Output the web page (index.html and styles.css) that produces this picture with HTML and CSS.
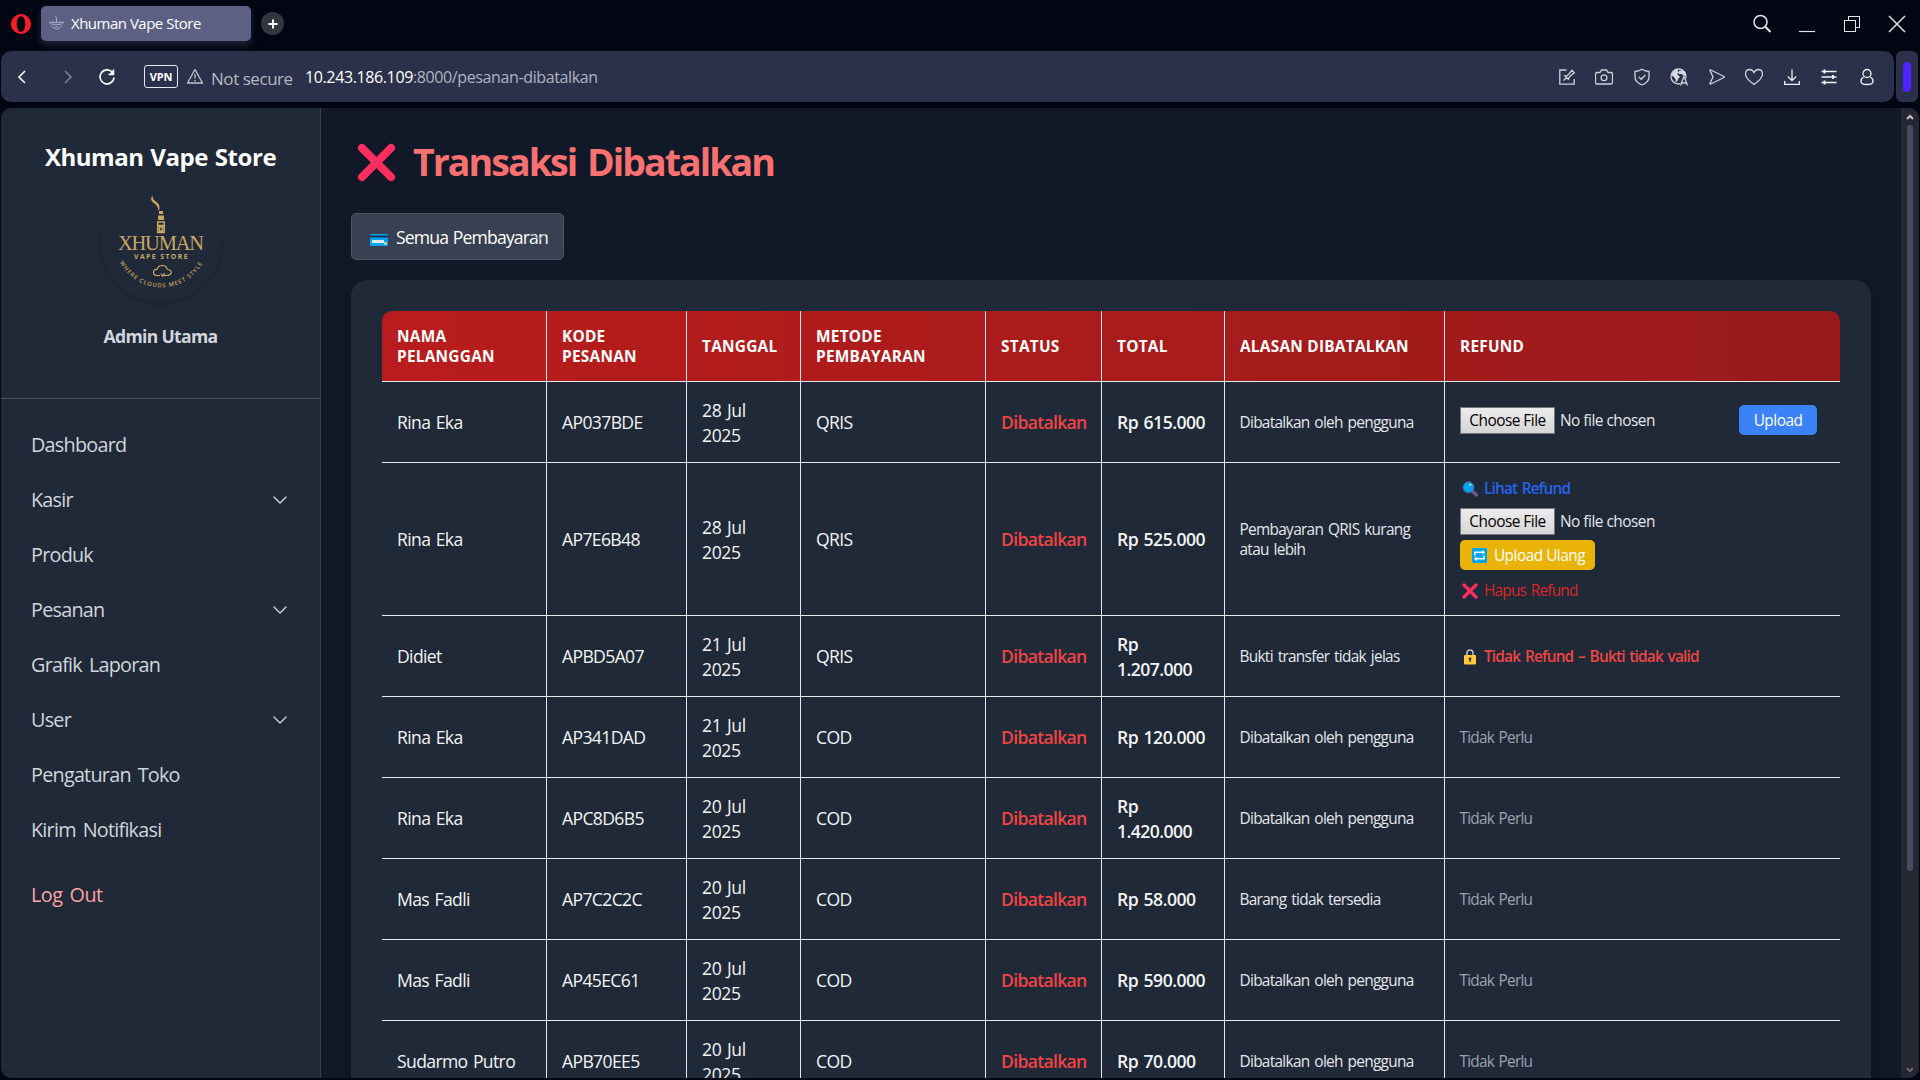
FILE: index.html
```html
<!DOCTYPE html>
<html lang="id">
<head>
<meta charset="utf-8">
<title>Xhuman Vape Store</title>
<link rel="stylesheet" href="styles.css">
</head>
<body>
<svg class="defs" width="0" height="0" aria-hidden="true">
  <symbol id="cross" viewBox="0 0 16 16"><path d="M2 2l12 12M14 2L2 14" stroke="#ff2e5f" stroke-width="3.2" stroke-linecap="round"/></symbol>
  <symbol id="chevron" viewBox="0 0 16 16"><path d="M2 5l6 6 6-6" fill="none" stroke="currentColor" stroke-width="1.4" stroke-linecap="round" stroke-linejoin="round"/></symbol>
</svg>

<header class="tabbar">
  <svg class="opera" viewBox="0 0 20 20"><path fill="#ff1b2d" fill-rule="evenodd" d="M10 0a10 10 0 1 0 0 20a10 10 0 1 0 0-20zM10 2.2c2.6 0 4.300 3.300 4.300 7.800s-1.700 7.800-4.300 7.800S5.700 14.500 5.700 10S7.400 2.200 10 2.200z"/></svg>
  <div class="tab">
    <svg class="favicon" viewBox="0 0 16 16" fill="none" stroke="#a9adc4"><path d="M7 0l1 2v4M8 3v4M1 7h14M3 9h10M2 10q6 8 12 0M6 11.500h4"/><path d="M1 5.500v3M4 5.500v3M12 5.500v3M15 5.500v3" stroke-width=".8"/></svg>
    <span class="tab-title">Xhuman Vape Store</span>
  </div>
  <div class="newtab"><svg viewBox="0 0 10 10" width="10" height="10"><path d="M5 .5v9M.5 5h9" stroke="#fff" stroke-width="2"/></svg></div>
  <div class="window-buttons">
    <svg viewBox="0 0 20 20" width="20" height="20"><circle cx="8.500" cy="8" r="6.500"/><path d="M13.300 12.800l5.200 5.200" stroke-width="2"/></svg>
    <svg viewBox="0 0 20 20" width="20" height="20"><path d="M2 17.500h16" stroke-width="1.200"/></svg>
    <svg viewBox="0 0 20 20" width="20" height="20" shape-rendering="crispEdges"><path d="M2.500 6.500h11v11h-11zM6.500 6v-3.500h11v11H14" stroke-width="1"/></svg>
    <svg viewBox="0 0 20 20" width="20" height="20"><path d="M2 2l16 16M18 2L2 18"/></svg>
  </div>
</header>

<div class="addressrow">
  <nav class="toolbar">
    <svg class="back" viewBox="0 0 10 14"><path d="M8 1L2 7l6 6"/></svg>
    <svg class="forward" viewBox="0 0 10 14"><path d="M2 1l6 6-6 6"/></svg>
    <svg class="reload" viewBox="0 0 18 18"><path d="M14.500 4.500A7 7 0 1 0 16 9.500M15.500 1.500v5h-5"/><path d="M11.500 6l4-4v4z" fill="#fff" stroke="none"/></svg>
    <span class="vpn">VPN</span>
    <svg class="warn" viewBox="0 0 18 17"><path d="M9 1.500L16.500 15h-15zM9 6v4.500M9 12v1.500" stroke-linejoin="round"/></svg>
    <span class="insecure">Not secure</span>
    <span class="url"><b>10.243.186.109</b>:8000/pesanan-dibatalkan</span>
    <div class="tools">
      <svg viewBox="0 0 18 18"><path d="M8.500 2H1.800v14.200h14.400V11M5.500 12.500l3.300-3.300M6.300 7.200l4.500 4.500M7.300 8q1.700.3 3-1.300L14 2.300 16.300 4.600 12 8.300q-1.600 1.300-1.300 3"/></svg>
      <svg viewBox="0 0 18 18"><path d="M2 4.500h3L6.500 2h5L13 4.500h3q1.500 0 1.500 1.500v8.500q0 1.500-1.500 1.500H2q-1.500 0-1.500-1.500V6q0-1.500 1.500-1.500z"/><circle cx="9" cy="9.800" r="2.900"/></svg>
      <svg viewBox="0 0 18 18"><path d="M9 1.300q3.500 2.200 7 2.200v5.500q0 5-7 8q-7-3-7-8V3.500q3.500 0 7-2.200zM5.800 8.800l2.500 2.500 4-4.300"/></svg>
      <svg viewBox="0 0 18 18"><circle cx="8.500" cy="8.500" r="7.500"/><path d="M7 1q-4 1-6 6l3 2 2 3-1 2q3 0 3-3l2-2-3-3 2-1zM9 3l4-1q4 3 3 6H13l-1-2-3 0z" fill="#d5d8e0" stroke="none"/><path d="M9 18.500l4.500-11h1L19 18.500z" fill="#2a3049" stroke="none"/><path d="M10.500 17.500l3.200-8.500h.6l3.200 8.500M11.500 15h5"/></svg>
      <svg viewBox="0 0 18 18"><path d="M2 2.500q0-.8.800-.5L16 8.500q.8.500 0 1L2.800 16q-.8.300-.8-.5L5 9z"/></svg>
      <svg viewBox="0 0 18 18"><path d="M9 16.500Q.5 10.500.5 6Q.5 1.800 4.500 1.500Q7.500 1.500 9 4.500Q10.500 1.500 13.500 1.500Q17.500 1.800 17.500 6Q17.500 10.500 9 16.500z"/></svg>
      <svg class="bright" viewBox="0 0 18 18"><path d="M9 1.500v11M4.800 8.500L9 12.700l4.200-4.200M1.700 13v3.300h14.600V13"/></svg>
      <svg class="bright" viewBox="0 0 18 18"><path d="M1.500 3.500h15M1.500 9h15M1.500 14.500h15"/><path d="M4.500 1.500v4M13 7v4M4.500 12.500v4" stroke-width="2"/></svg>
      <svg class="bright" viewBox="0 0 18 18"><circle cx="9" cy="5.500" r="4"/><path d="M5.500 9Q3 10.500 3 13.500Q3 16.500 9 16.500T15 13.500Q15 10.500 12.500 9"/></svg>
    </div>
  </nav>
  <div class="sidepanel"><i></i></div>
</div>

<div class="page">
  <aside class="sidebar">
    <div class="brand">
      <h2>Xhuman Vape Store</h2>
      <svg class="logo" viewBox="0 0 120 120">
        <defs><path id="ring" d="M18.500 79.500A47 47 0 0 0 102.500 79.500"/></defs>
        <path d="M51.500 13.500Q48.500 17 52 20.500Q57.500 23.500 57.500 29Q60.500 24 55.500 20Q51.500 17.500 51.500 13.500z" fill="#c9a765"/>
        <path d="M58 29h4v3h-4zM57 33.500h6v4.500h-6z" fill="#c9a765"/>
        <path d="M56.700 40h6.600v10.500h-6.600zM56 43.500h8M58.500 45h3v4h-3z" fill="none" stroke="#c9a765" stroke-width="1.500"/>
        <text class="logo-name" x="17" y="67.500" textLength="86">XHUMAN</text>
        <text class="logo-sub" x="33" y="77" textLength="53.500">VAPE STORE</text>
        <path transform="translate(2 .5)" d="M57 93h-4q-3-1-2.500-4q1-2.500 3.500-2Q55 83 59.300 83t5 4q4 0 4 3.200q-1 2.800-4.500 2.800H61q-3 0-3-2M61 90.500q1 2-2 3.500" fill="none" stroke="#c9a765" stroke-width="1.100"/>
        <text class="logo-motto"><textPath href="#ring" textLength="100" startOffset="1">WHERE CLOUDS  MEET STYLE</textPath></text>
      </svg>
      <p>Admin Utama</p>
    </div>
    <ul class="menu">
      <li>Dashboard</li>
      <li>Kasir<svg><use href="#chevron"/></svg></li>
      <li>Produk</li>
      <li>Pesanan<svg><use href="#chevron"/></svg></li>
      <li>Grafik Laporan</li>
      <li>User<svg><use href="#chevron"/></svg></li>
      <li>Pengaturan Toko</li>
      <li>Kirim Notifikasi</li>
      <li class="logout">Log Out</li>
    </ul>
  </aside>

  <main class="content">
    <h1><svg viewBox="0 0 16 16"><use href="#cross"/></svg><span>Transaksi Dibatalkan</span></h1>
    <div class="filter">
      <svg viewBox="0 0 18 12"><rect width="18" height="12" rx="1" fill="#00a4ef"/><path d="M0 1.500h18v2H0z" fill="#17305c"/><path d="M2 6h12v3H2z" fill="#d9ecf7"/><path d="M14 8.500h3v2h-3z" fill="#ffe066"/></svg>
      <span>Semua Pembayaran</span>
      <svg class="filter-arrow"><use href="#chevron"/></svg>
    </div>
    <section class="card">
      <table>
        <colgroup><col class="c1"><col class="c2"><col class="c3"><col class="c4"><col class="c5"><col class="c6"><col class="c7"><col class="c8"></colgroup>
        <thead>
          <tr><th>NAMA<br>PELANGGAN</th><th>KODE<br>PESANAN</th><th>TANGGAL</th><th>METODE<br>PEMBAYARAN</th><th>STATUS</th><th>TOTAL</th><th>ALASAN DIBATALKAN</th><th>REFUND</th></tr>
        </thead>
        <tbody>
          <tr><td>Rina Eka</td><td>AP037BDE</td><td class="date">28 Jul<br>2025</td><td>QRIS</td><td class="status">Dibatalkan</td><td class="total">Rp 615.000</td><td class="reason">Dibatalkan oleh pengguna</td>
            <td class="refund"><div class="upload-row"><div class="file"><span class="choose">Choose File</span><span>No file chosen</span></div><span class="btn blue">Upload</span></div></td></tr>
          <tr class="tall"><td>Rina Eka</td><td>AP7E6B48</td><td class="date">28 Jul<br>2025</td><td>QRIS</td><td class="status">Dibatalkan</td><td class="total">Rp 525.000</td><td class="reason">Pembayaran QRIS kurang<br>atau lebih</td>
            <td class="refund"><div class="stack">
              <div class="link see"><svg viewBox="0 0 16 16"><path d="M10 10l4.500 4" stroke="#6b5b95" stroke-width="3.200" stroke-linecap="round"/><circle cx="6.500" cy="6.300" r="5.500" fill="#00a4ef" stroke="#51618f"/><circle cx="8.300" cy="3.800" r="1" fill="#fff"/></svg>Lihat Refund</div>
              <div class="file"><span class="choose">Choose File</span><span>No file chosen</span></div>
              <div class="btn amber"><svg viewBox="0 0 16 16"><rect width="16" height="16" rx="1.500" fill="#00a4ef"/><path d="M3 8V4.500h9M13 8v3.500H4" fill="none" stroke="#fff" stroke-width="1.600"/><path d="M11 2l3 2.500L11 7zM5 9l-3 2.500L5 14z" fill="#fff"/></svg><span>Upload Ulang</span></div>
              <div class="link remove"><svg viewBox="0 0 16 16"><use href="#cross"/></svg>Hapus Refund</div>
            </div></td></tr>
          <tr><td>Didiet</td><td>APBD5A07</td><td class="date">21 Jul<br>2025</td><td>QRIS</td><td class="status">Dibatalkan</td><td class="total">Rp<br>1.207.000</td><td class="reason">Bukti transfer tidak jelas</td>
            <td class="refund"><div class="link denied"><svg viewBox="0 0 16 16"><path d="M5 7V4q0-3 3-3t3 3v3" fill="none" stroke="#b9bcc6" stroke-width="1.600"/><rect x="2" y="6" width="12" height="9.500" rx="1" fill="#ffc83d"/><circle cx="8" cy="9.800" r="1.500" fill="#4b3a35"/><path d="M8 10v3" stroke="#4b3a35" stroke-width="1.400"/></svg>Tidak Refund – Bukti tidak valid</div></td></tr>
          <tr><td>Rina Eka</td><td>AP341DAD</td><td class="date">21 Jul<br>2025</td><td>COD</td><td class="status">Dibatalkan</td><td class="total">Rp 120.000</td><td class="reason">Dibatalkan oleh pengguna</td><td class="none">Tidak Perlu</td></tr>
          <tr><td>Rina Eka</td><td>APC8D6B5</td><td class="date">20 Jul<br>2025</td><td>COD</td><td class="status">Dibatalkan</td><td class="total">Rp<br>1.420.000</td><td class="reason">Dibatalkan oleh pengguna</td><td class="none">Tidak Perlu</td></tr>
          <tr><td>Mas Fadli</td><td>AP7C2C2C</td><td class="date">20 Jul<br>2025</td><td>COD</td><td class="status">Dibatalkan</td><td class="total">Rp 58.000</td><td class="reason">Barang tidak tersedia</td><td class="none">Tidak Perlu</td></tr>
          <tr><td>Mas Fadli</td><td>AP45EC61</td><td class="date">20 Jul<br>2025</td><td>COD</td><td class="status">Dibatalkan</td><td class="total">Rp 590.000</td><td class="reason">Dibatalkan oleh pengguna</td><td class="none">Tidak Perlu</td></tr>
          <tr><td>Sudarmo Putro</td><td>APB70EE5</td><td class="date">20 Jul<br>2025</td><td>COD</td><td class="status">Dibatalkan</td><td class="total">Rp 70.000</td><td class="reason">Dibatalkan oleh pengguna</td><td class="none">Tidak Perlu</td></tr>
        </tbody>
      </table>
    </section>
  </main>

  <div class="scrollbar">
    <svg viewBox="0 0 8 6"><path d="M1 5l3-3 3 3" fill="none" stroke="#c4c4c8" stroke-width="2"/></svg>
    <i></i>
    <svg class="down" viewBox="0 0 8 6"><path d="M1 1l3 3 3-3" fill="none" stroke="#6a6a70" stroke-width="2"/></svg>
  </div>
</div>
</body>
</html>
```
FILE: styles.css
```css
* { box-sizing: border-box; }
body {
  margin: 0;
  width: 1920px;
  height: 1080px;
  overflow: hidden;
  background: #020512;
  color: #f3f4f6;
  font-family: "Open Sans", "Noto Sans", sans-serif;
  font-size: 17px;
  letter-spacing: -0.5px;
  display: flex;
  flex-direction: column;
  white-space: nowrap;
}
svg { flex: none; display: block; }
.defs { position: absolute; }
h1, h2, p, ul { margin: 0; padding: 0; }

/* Tab strip */
.tabbar { height: 51px; flex: none; display: flex; align-items: flex-start; padding: 6px 13px 0 11px; }
.opera { width: 20px; height: 20px; margin: 8px 10px 0 0; }
.tab {
  width: 210px; height: 35px; border-radius: 5px; background: #5c6183;
  display: flex; align-items: center; padding-left: 8px; gap: 7px;
  box-shadow: 0 4px 7px rgba(92, 97, 131, .35);
}
.favicon { width: 15px; height: 15px; }
.tab-title { font-size: 15px; color: #fff; letter-spacing: -0.5px; padding-bottom: 2px; }
.newtab {
  width: 23px; height: 23px; border-radius: 50%; background: #33353f; margin: 6px 0 0 10px;
  display: flex; align-items: center; justify-content: center;
}
.window-buttons { margin-left: auto; margin-top: 8px; display: flex; gap: 25px; fill: none; stroke: #e3e4ea; stroke-width: 1.5; }

/* Address row */
.addressrow { height: 51px; flex: none; display: flex; gap: 2px; padding: 0 2px 0 1px; }
.toolbar {
  width: 1893px; border-radius: 10px; background: #2b314a; display: flex; align-items: center;
  padding: 0 18.5px 0 16px; fill: none; stroke: #fff; stroke-width: 1.6;
}
.back { width: 10px; height: 14px; margin-right: 36px; }
.forward { width: 10px; height: 14px; margin-right: 25px; stroke: #7b8096; }
.reload { width: 18px; height: 18px; margin-right: 28px; }
.vpn {
  width: 34px; height: 23px; border: 1.5px solid #e8e9ee; border-radius: 3px; margin-right: 8px;
  font-size: 11px; font-weight: 700; line-height: 22px; text-align: center; color: #fff; letter-spacing: -0.2px;
}
.warn { width: 18px; height: 17px; stroke: #c1c4cc; stroke-width: 1.3; margin-right: 7px; }
.insecure { width: 94px; font-size: 17px; color: #b5b8c0; padding-top: 3px; letter-spacing: -0.45px; }
.url { font-size: 16px; color: #aeb3c2; letter-spacing: -0.38px; }
.url b { font-weight: 400; color: #fff; }
.tools { margin-left: auto; display: flex; gap: 19.5px; stroke: #cfd1d7; stroke-width: 1.3; }
.tools svg { width: 18px; height: 18px; }
.tools .bright { stroke: #f1f2f5; }
.sidepanel { width: 22px; border-radius: 6px; background: #2b314a; display: flex; align-items: center; justify-content: center; }
.sidepanel i { width: 8px; height: 30px; border-radius: 4px; background: #4f22ff; }

/* Page frame */
.page {
  margin: 6px 1px 2px; width: 1918px; height: 970px; background: #111827;
  border-radius: 10px; overflow: hidden; display: flex;
}
.sidebar { width: 320px; flex: none; background: #1f2937; border-right: 1px solid #374151; }
.brand { height: 291px; border-bottom: 1px solid #4b5563; display: flex; flex-direction: column; align-items: center; padding-top: 32px; }
.brand h2 { font-size: 24px; line-height: 34px; font-weight: 700; color: #fff; letter-spacing: -0.45px; word-spacing: 1px; }
.logo { width: 120px; height: 120px; margin-top: 8px; border-radius: 50%; box-shadow: 0 2px 4px rgba(0, 0, 0, .12); }
.logo text { fill: #c9a765; letter-spacing: 0; }
.logo-name { font: 20.500px "Liberation Serif", serif; }
.logo-sub { font: 700 6.8px "Open Sans", sans-serif; }
.logo-motto { font: 600 5.800px "Open Sans", sans-serif; }
.brand p { margin-top: 21px; font-size: 17.6px; line-height: 26px; font-weight: 700; color: #d1d5db; letter-spacing: -0.68px; }
.menu { list-style: none; padding: 18px 32px 0 30px; font-size: 19.8px; color: #d1d5db; letter-spacing: -0.75px; word-spacing: 2.5px; }
.menu li { height: 55px; display: flex; align-items: center; justify-content: space-between; }
.menu svg { width: 16px; height: 16px; }
.menu .logout { margin-top: 10px; color: #fca5a5; letter-spacing: -0.5px; }

.content { width: 1580px; flex: none; padding: 26px 30px 0; }
h1 { height: 56px; display: flex; align-items: center; padding-left: 6px; gap: 17px; color: #f87171; font-size: 37.500px; line-height: 56px; font-weight: 700; letter-spacing: -1.95px; word-spacing: 3px; }
h1 svg { width: 39px; height: 39px; }
.filter {
  position: relative; width: 213px; height: 47px; margin-top: 23px; border: 1px solid #4b5563; border-radius: 5px;
  background: #374151; display: flex; align-items: center; padding-left: 18px; gap: 8px; font-size: 17.6px; letter-spacing: -0.85px; word-spacing: 1px;
}
.filter > svg:first-child { width: 18px; height: 12px; margin-top: 7px; }
.filter .filter-arrow { position: absolute; right: 16px; top: 15px; width: 16px; height: 16px; color: #6b7280; opacity: .7; }
.filter span { color: #fff; }

/* Table card */
.card { width: 1520px; height: 900px; margin-top: 20px; border-radius: 16px; background: #1f2937; padding: 31px; box-shadow: 0 8px 20px rgba(0, 0, 0, .2); }
table { width: 1458px; table-layout: fixed; border-spacing: 0; border-radius: 10px 10px 0 0; overflow: hidden; }
.c1 { width: 165px; } .c2 { width: 140px; } .c3 { width: 114px; } .c4 { width: 185px; }
.c5 { width: 116px; } .c6 { width: 123px; } .c7 { width: 220px; } .c8 { width: 395px; }
thead { background: linear-gradient(90deg, #b91c1c, #991b1b); }
th, td { padding: 2px 14px 0 15px; border-bottom: 1px solid #e5e7eb; border-right: 1px solid #e5e7eb; text-align: left; vertical-align: middle; }
th:last-child, td:last-child { border-right: 0; }
th { height: 71px; font-size: 15.400px; line-height: 20px; font-weight: 700; color: #fff; letter-spacing: 0.25px; }
td { height: 81px; padding-top: 1px; font-size: 17.600px; line-height: 25px; letter-spacing: -0.65px; word-spacing: 1.5px; }
.tall td { height: 153px; }
.date { padding-top: 2px; letter-spacing: -0.4px; }
.status { color: #ef4444; font-weight: 600; letter-spacing: -0.7px; }
.total { font-weight: 600; letter-spacing: -0.55px; }
.reason { padding-top: 2px; font-size: 15.400px; line-height: 20px; color: #e5e7eb; padding-right: 0; padding-left: 14.500px; letter-spacing: -0.7px; }
.refund, .none { padding-top: 2px; font-size: 15.400px; line-height: 20px; padding-left: 15px; letter-spacing: -0.8px; }
.none { color: #9ca3af; padding-left: 14.500px; }
.upload-row { display: flex; align-items: center; justify-content: space-between; padding-right: 9px; margin-bottom: 6px; }
.file { display: flex; align-items: center; gap: 5px; height: 27px; color: #e5e7eb; letter-spacing: -0.5px; word-spacing: 0; }
.file span:last-child { padding-top: 1px; }
.choose {
  width: 95px; height: 27px; border: 1px solid #767676; background: linear-gradient(#ececec, #d5d5d5);
  color: #000; text-align: center; line-height: 26px;
}
.btn { height: 30px; border-radius: 5px; color: #fff; display: flex; align-items: center; justify-content: center; font-size: 15.400px; letter-spacing: -0.5px; word-spacing: 0; padding-top: 1px; }
.blue { width: 78px; background: #3b82f6; }
.amber { width: 135px; background: #eab308; gap: 7px; margin: 5px 0 11px; padding-left: 2px; }
.link { display: flex; align-items: center; gap: 6px; padding-left: 2px; height: 20px; }
.link svg { width: 16px; height: 16px; }
.btn svg { width: 15px; height: 15px; }
.see { color: #2563eb; font-weight: 600; margin-bottom: 9px; letter-spacing: -0.85px; }
.remove { color: #dc2626; }
.denied { color: #ef4444; font-weight: 600; letter-spacing: -0.82px; }

/* Page scrollbar */
.scrollbar { width: 18px; flex: none; background: #252733; display: flex; flex-direction: column; align-items: center; padding: 6px 0 5px; }
.scrollbar i { width: 6px; height: 746px; border-radius: 3px; background: #4a4a64; margin-top: 5px; }
.scrollbar svg { width: 8px; height: 6px; }
.scrollbar .down { margin-top: auto; }
```
